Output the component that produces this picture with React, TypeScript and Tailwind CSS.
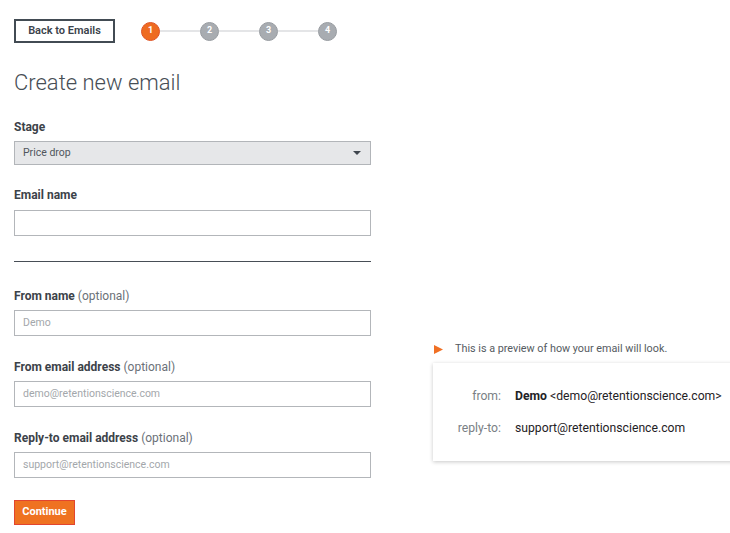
import React from "react";

function Label({ title, optional }: { title: string; optional?: boolean }) {
  return (
    <div className="h-4 text-[12px] leading-4 text-[#3c4249]">
      <span className="font-bold">{title}</span>
      {optional && <span className="text-[#6b7178]"> (optional)</span>}
    </div>
  );
}

function Input({ placeholder }: { placeholder?: string }) {
  return (
    <div className="mt-[7px] flex h-[26px] items-center border border-[#b3b6ba] bg-white pl-[8px] text-[10.5px] text-[#a3a7ab]">
      {placeholder}
    </div>
  );
}

export default function App() {
  const steps = [1, 2, 3, 4];
  return (
    <div
      className="w-[730px] h-[533px] overflow-hidden bg-white"
      style={{ fontFamily: "Roboto, 'Liberation Sans', sans-serif" }}
    >
      <div className="flex">
        <div className="w-[371px] shrink-0 pl-[14px] pt-[19px]">
          <div className="flex h-6 items-center">
            <div className="flex h-6 w-[101px] items-center justify-center border-2 border-[#424b53] text-[11px] font-semibold text-[#3b434b]">
              Back to Emails
            </div>
            <div className="ml-[26px] flex items-center">
              {steps.map((s, i) => (
                <div key={s} className="flex items-center">
                  {i > 0 && <div className="h-[2px] w-[40px] bg-[#e4e5e7]" />}
                  <div
                    className={
                      i === 0
                        ? "flex h-[19px] w-[19px] items-center justify-center rounded-full border border-[#df5426] bg-[#ee6b21] text-[9px] font-bold text-white"
                        : "flex h-[19px] w-[19px] items-center justify-center rounded-full border border-[#989ca1] bg-[#a8acb1] text-[9px] font-bold text-white"
                    }
                  >
                    {s}
                  </div>
                </div>
              ))}
            </div>
          </div>

          <div className="mt-[26px] h-[28px] text-[22px] font-light leading-[28px] text-[#474e56]">
            Create new email
          </div>

          <div className="mt-[22px]">
            <Label title="Stage" />
          </div>
          <div className="mt-[6px] flex h-[24px] items-center justify-between border border-[#b2b5b9] bg-[#e6e7e9] pl-[8px] pr-[9px] text-[10.5px] text-[#50565d]">
            <span>Price drop</span>
            <svg width="8" height="4" viewBox="0 0 8 4">
              <polygon points="0,0 8,0 4,4" fill="#3f464e" />
            </svg>
          </div>

          <div className="mt-[22px]">
            <Label title="Email name" />
          </div>
          <div className="mt-[7px] h-[26px] border border-[#b3b6ba] bg-white" />

          <div className="mt-[25px] h-px bg-[#474e56]" />

          <div className="mt-[26px]">
            <Label title="From name" optional />
          </div>
          <div className="-mt-px">
            <Input placeholder="Demo" />
          </div>

          <div className="mt-[23px]">
            <Label title="From email address" optional />
          </div>
          <div className="-mt-px">
            <Input placeholder="demo@retentionscience.com" />
          </div>

          <div className="mt-[23px]">
            <Label title="Reply-to email address" optional />
          </div>
          <div className="-mt-px">
            <Input placeholder="support@retentionscience.com" />
          </div>

          <div className="mt-[22px] flex h-[25px] w-[61px] items-center justify-center border border-[#e2452f] bg-[#ef7221] text-[11px] font-bold text-white">
            Continue
          </div>
        </div>

        <div className="ml-[62px] shrink-0 pt-[341px]">
          <div className="flex h-4 items-center whitespace-nowrap text-[10.8px] text-[#555b61]">
            <svg width="9" height="9" viewBox="0 0 9 9" className="ml-[1px] shrink-0">
              <polygon points="0,0 9,4.5 0,9" fill="#f07024" />
            </svg>
            <span className="ml-[12px]">This is a preview of how your email will look.</span>
          </div>
          <div className="mt-[6px] w-[330px] bg-white pb-[23px] pl-[23px] pt-[23px] shadow-[0_1px_4px_rgba(0,0,0,0.22)]">
            <div className="flex h-5 items-center whitespace-nowrap text-[12.2px]">
              <span className="flex w-[45px] shrink-0 justify-end text-[#7a7f85]">from:</span>
              <span className="ml-[14px] text-[#1f2226]">
                <span className="font-bold">Demo</span> &lt;demo@retentionscience.com&gt;
              </span>
            </div>
            <div className="mt-[12px] flex h-5 items-center whitespace-nowrap text-[12.2px]">
              <span className="flex w-[45px] shrink-0 justify-end text-[#7a7f85]">reply-to:</span>
              <span className="ml-[14px] text-[#1f2226]">support@retentionscience.com</span>
            </div>
          </div>
        </div>
      </div>
    </div>
  );
}
